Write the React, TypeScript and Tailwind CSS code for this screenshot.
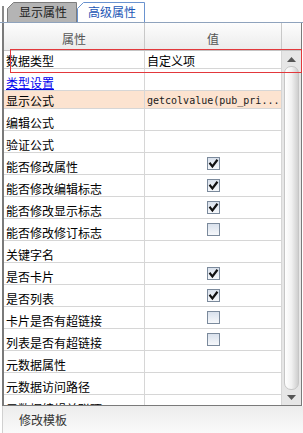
import React from "react";

const FONT = '"Noto Sans CJK SC", "Noto Sans", sans-serif';

function Check({ on }: { on: boolean }) {
  return (
    <div className="w-[13px] h-[13px] border border-[#7b8a9c] bg-linear-to-b from-[#d9e1ec] to-[#f6f8fb] flex items-center justify-center">
      {on && (
        <svg width="11" height="11" viewBox="0 0 11 11">
          <path d="M2.2 5.6 L4.4 8.4 L8.8 2.6" fill="none" stroke="#111" strokeWidth="2.2" strokeLinecap="square" />
        </svg>
      )}
    </div>
  );
}

type Row = {
  k: string;
  v?: string;
  c?: boolean;
  h: string;
  peach?: boolean;
  link?: boolean;
  mono?: boolean;
};

const rows: Row[] = [
  { k: "数据类型", v: "自定义项", h: "h-[18px]" },
  { k: "类型设置", link: true, h: "h-[22px]" },
  { k: "显示公式", v: "getcolvalue(pub_pri...", mono: true, peach: true, h: "h-[18px]" },
  { k: "编辑公式", h: "h-[22px]" },
  { k: "验证公式", h: "h-[22px]" },
  { k: "能否修改属性", c: true, h: "h-[22px]" },
  { k: "能否修改编辑标志", c: true, h: "h-[22px]" },
  { k: "能否修改显示标志", c: true, h: "h-[22px]" },
  { k: "能否修改修订标志", c: false, h: "h-[22px]" },
  { k: "关键字名", h: "h-[22px]" },
  { k: "是否卡片", c: true, h: "h-[22px]" },
  { k: "是否列表", c: true, h: "h-[22px]" },
  { k: "卡片是否有超链接", c: false, h: "h-[22px]" },
  { k: "列表是否有超链接", c: false, h: "h-[22px]" },
  { k: "元数据属性", h: "h-[22px]" },
  { k: "元数据访问路径", h: "h-[22px]" },
  { k: "元数据编辑关联项", h: "h-[22px]" },
];

function TabShape({ fill, stroke, w }: { fill: string; stroke: string; w: number }) {
  return (
    <svg className="absolute left-0 top-0" width={w} height={20} viewBox={`0 0 ${w} 20`}>
      <path d={`M0.5 20 L0.5 6.5 L6.5 0.5 L${w - 0.5} 0.5 L${w - 0.5} 20`} fill={fill} stroke={stroke} strokeWidth="1" />
    </svg>
  );
}

export default function App() {
  return (
    <div className="w-[303px] h-[433px] bg-white relative overflow-hidden flex flex-col" style={{ fontFamily: FONT }}>
      {/* tab strip */}
      <div className="h-[23px] flex items-end border-b border-[#8fa3bd] shrink-0">
        <div className="w-[2px] ml-[2px] h-[16px] bg-[#8a8a8a]" />
        <div className="ml-[3px] relative w-[70px] h-[20px] flex items-center justify-center">
          <TabShape fill="#b4b4b4" stroke="#7d7d7d" w={70} />
          <span className="relative text-[12px] leading-[14px] text-[#222] pl-[2px]">显示属性</span>
        </div>
        <div className="relative w-[68px] h-[20px] flex items-center justify-center">
          <TabShape fill="#ffffff" stroke="#6a93cf" w={68} />
          <span className="relative text-[12px] leading-[14px] text-[#1b56b5] pl-[2px]">高级属性</span>
        </div>
      </div>

      {/* frame */}
      <div className="h-[383px] shrink-0 ml-[2px] w-[300px] border-l-2 border-r border-b border-[#7a7a7a] flex flex-col">
        {/* header */}
        <div className="h-[28px] shrink-0 flex border-b border-[#c4c4c4] bg-linear-to-b from-[#fdfdfd] to-[#ebebeb]">
          <div className="w-[141px] border-r border-[#c8c8c8] flex justify-center pt-[9px] text-[12px] leading-[14px] text-[#555]">属性</div>
          <div className="w-[137px] border-r border-[#c8c8c8] flex justify-center pt-[9px] text-[12px] leading-[14px] text-[#555]">值</div>
          <div className="flex-1" />
        </div>
        {/* body */}
        <div className="flex-1 flex min-h-0">
          <div className="w-[278px] overflow-hidden flex flex-col">
            {rows.map((r, i) => (
              <div key={i} className={`${r.h} shrink-0 flex border-b border-[#d6d6d6] ${r.peach ? "bg-[#fce3d0]" : ""}`}>
                <div className="w-[141px] border-r border-[#d6d6d6] flex items-end pl-[2px] text-[12px] leading-[14px] whitespace-nowrap overflow-hidden">
                  {r.link ? <span className="text-[#0000ee] underline">{r.k}</span> : <span className="text-black">{r.k}</span>}
                </div>
                <div className="w-[137px] border-r border-[#d6d6d6] flex items-end pl-[2px] whitespace-nowrap overflow-hidden relative">
                  {r.v && !r.mono && <span className="text-[12px] leading-[14px] text-black">{r.v}</span>}
                  {r.mono && (
                    <span className="text-[10px] leading-[14px] text-[#1a1a1a]" style={{ fontFamily: '"DejaVu Sans Mono", monospace' }}>
                      {r.v}
                    </span>
                  )}
                  {r.c !== undefined && (
                    <div className="absolute inset-0 flex items-center justify-center">
                      <Check on={r.c} />
                    </div>
                  )}
                </div>
              </div>
            ))}
          </div>
          {/* scrollbar */}
          <div className="flex-1 bg-[#e6e6e6] flex flex-col px-[2px] pt-[1px] pb-[1px]">
            <div className="h-[14px] shrink-0 flex items-center justify-center">
              <svg width="9" height="5" viewBox="0 0 9 5"><path d="M0 5 L4.5 0 L9 5 Z" fill="#555" /></svg>
            </div>
            <div className="flex-1 rounded-[7px] border border-[#c6c6c6] bg-linear-to-r from-[#ffffff] via-[#f1f1f1] to-[#cfcfcf]" />
            <div className="h-[14px] shrink-0 flex items-center justify-center">
              <svg width="9" height="5" viewBox="0 0 9 5"><path d="M0 0 L9 0 L4.5 5 Z" fill="#555" /></svg>
            </div>
          </div>
        </div>
      </div>

      {/* footer */}
      <div className="flex-1 ml-[2px] border-l border-[#d0d0d0] bg-linear-to-b from-[#ececec] to-[#fafafa] pl-[16px] pt-[7px] text-[12px] leading-[14px] text-[#333]">
        修改模板
      </div>

      {/* red highlight box */}
      <div className="absolute left-[10px] top-[49px] w-[292px] h-[24px] border border-[#e2383c] pointer-events-none" />
    </div>
  );
}
